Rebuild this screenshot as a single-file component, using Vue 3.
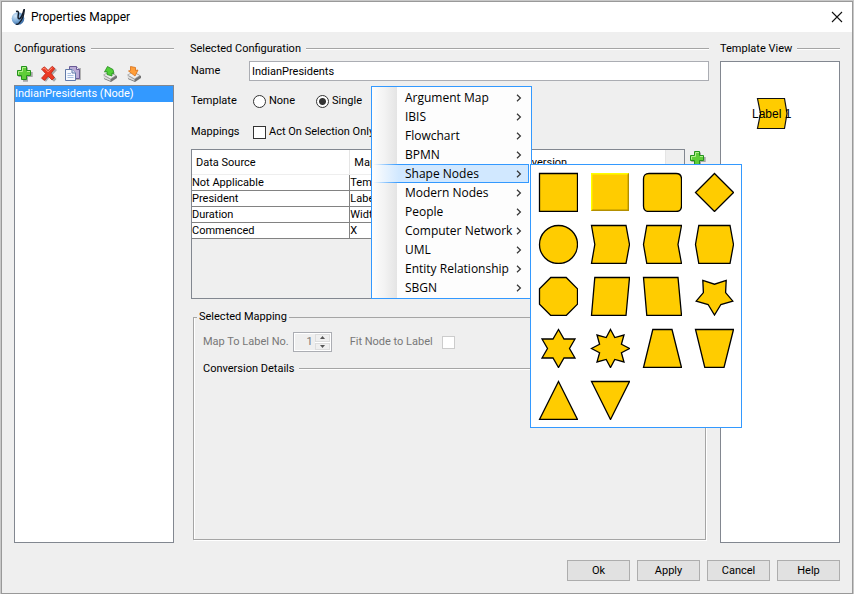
<script setup>
import { ref } from 'vue'

const name = ref('IndianPresidents')
const template = ref('single')
const actOnSelection = ref(false)
const rows = [
  ['Not Applicable', 'Template', ''],
  ['President', 'Label', ''],
  ['Duration', 'Width', ''],
  ['Commenced', 'X', '']
]
const menu = ['Argument Map', 'IBIS', 'Flowchart', 'BPMN', 'Shape Nodes', 'Modern Nodes', 'People', 'Computer Network', 'UML', 'Entity Relationship', 'SBGN']
const shapes = [
  { id: 'Square', d: 'M1.5 1.5H39.5V39.5H1.5Z' },
  { id: 'Bevelled square', bevel: true },
  { id: 'Rounded square', d: 'M7 1.5H34Q39.5 1.5 39.5 7V34Q39.5 39.5 34 39.5H7Q1.5 39.5 1.5 34V7Q1.5 1.5 7 1.5Z' },
  { id: 'Diamond', d: 'M20.5 1.5L39.5 20.5L20.5 39.5L1.5 20.5Z' },
  { id: 'Circle', d: 'M20.5 1.5A19 19 0 1 1 20.5 39.5A19 19 0 1 1 20.5 1.5Z' },
  { id: 'Right step', d: 'M1.5 1.5H36L39.5 20.5L36 39.5H1.5L4.8 20.5Z' },
  { id: 'Left step', d: 'M4.8 1.5H39.5L36 20.5L39.5 39.5H4.8L1.5 20.5Z' },
  { id: 'Hexagon', d: 'M4.8 1.5H36L39.5 20.5L36 39.5H4.8L1.5 20.5Z' },
  { id: 'Octagon', d: 'M12.8 1.5H28.2L39.5 12.8V28.2L28.2 39.5H12.8L1.5 28.2V12.8Z' },
  { id: 'Parallelogram', d: 'M4.8 1.5H39.5L36 39.5H1.5Z' },
  { id: 'Reverse parallelogram', d: 'M1.5 1.5H36L39.5 39.5H4.8Z' },
  { id: 'Five-point star', d: 'M8.8 4.4L20.5 8.2L32.2 4.4L31.6 16.6L38.8 25.2L26.9 28.5L20.5 39L14.1 28.5L2.2 25.2L9.4 16.6Z' },
  { id: 'Six-point star', d: 'M20.5 1.5L26 11H37L31.5 20.5L37 30H26L20.5 39.5L15 30H4L9.5 20.5L4 11H15Z' },
  { id: 'Eight-point star', d: 'M20.5 1.5L24.8 9.6L34 7L31.4 16.2L39.5 20.5L31.4 24.8L34 34L24.8 31.4L20.5 39.5L16.2 31.4L7 34L9.6 24.8L1.5 20.5L9.6 16.2L7 7L16.2 9.6Z' },
  { id: 'Trapezoid', d: 'M10.8 1.5H30L39.5 39.5H1.5Z' },
  { id: 'Inverted trapezoid', d: 'M1.5 1.5H39.5L30 39.5H10.8Z' },
  { id: 'Triangle', d: 'M20.5 1.5L39.5 39.5H1.5Z' },
  { id: 'Inverted triangle', d: 'M1.5 1.5H39.5L20.5 39.5Z' }
]
</script>

<template>
  <div class="window">
    <header class="titlebar">
      <svg class="logo" width="16" height="18" viewBox="0 0 16 18" aria-hidden="true">
        <defs>
          <radialGradient id="ball" cx="0.3" cy="0.3" r="0.8">
            <stop offset="0" stop-color="#d6e8f8" /><stop offset="0.5" stop-color="#80aeda" /><stop offset="1" stop-color="#2f639e" />
          </radialGradient>
        </defs>
        <circle cx="7" cy="10.5" r="6.3" fill="url(#ball)" />
        <path d="M5 3.5Q8.6 2.5 7.2 7.5Q6.6 11.2 8.6 10.8Q11.5 8.5 13 1.5" fill="none" stroke="#131d2b" stroke-width="1.5" />
        <path d="M13.4 1Q12.8 11 7.8 15.4Q5.8 17 5 15.8" fill="none" stroke="#131d2b" stroke-width="1.3" />
      </svg>
      <h1>Properties Mapper</h1>
      <button class="close" type="button" aria-label="Close">
        <svg width="12" height="12" viewBox="0 0 12 12"><path d="M1 1L11 11M11 1L1 11" stroke="#111" stroke-width="1.1" /></svg>
      </button>
    </header>

    <main class="body">
      <section class="configs">
        <h2 class="heading">Configurations</h2>
        <div class="toolbar">
          <button type="button" aria-label="Add configuration">
            <svg width="18" height="18" viewBox="0 0 18 18">
              <path d="M7 2.5H12V7H16.7V12H12V16.7H7V12H2.3V7H7Z" fill="#888" opacity="0.7" />
              <path d="M5.5 1.5H10.5V5.5H14.5V10.5H10.5V14.5H5.5V10.5H1.5V5.5H5.5Z" fill="#5fce38" stroke="#23921c" />
              <path d="M6.5 6.5V2.5H10M2.5 9.5V6.5H6.5M11 6.5H14" fill="none" stroke="#b5f08f" />
            </svg>
          </button>
          <button type="button" aria-label="Delete configuration">
            <svg width="18" height="18" viewBox="0 0 18 18">
              <path d="M3 5L6 3L10 7L14 2.5L17 5L12.5 10L16.5 14L14 16.8L9.5 12.5L6 16.8L3 14.8L7 10Z" fill="#777" opacity="0.6" />
              <path d="M1.5 4L4.5 1.8L8 5.5L12.3 1.2L14.8 3.6L11 8.2L14.5 12.6L12 15L8.2 11.2L4.5 15.4L1.5 13.2L5.6 8.6Z" fill="#ec3a24" stroke="#bd2717" stroke-width="0.8" />
              <path d="M2.6 4L4.5 3L8 6.9L12.3 2.6" fill="none" stroke="#ff8a70" />
            </svg>
          </button>
          <button type="button" aria-label="Duplicate configuration">
            <svg width="18" height="18" viewBox="0 0 18 18">
              <path d="M7 3H17V15H7Z" fill="#888" opacity="0.6" />
              <path d="M5.5 1.5H12.5L15.5 4.5V13.5H5.5Z" fill="#b9abd6" stroke="#6b5b96" />
              <path d="M12.5 1.5V4.5H15.5" fill="#eee9f8" stroke="#6b5b96" />
              <path d="M1.5 4.5H8L11.5 8V15.5H1.5Z" fill="#f6f9ff" stroke="#6179a8" />
              <path d="M8 4.5V8H11.5" fill="#dce6f6" stroke="#6179a8" />
              <path d="M3.5 8.5H7M3.5 10.5H9.5M3.5 12.5H9.5" stroke="#a9bfdf" />
            </svg>
          </button>
          <button class="apart" type="button" aria-label="Export configuration">
            <svg width="16" height="18" viewBox="0 0 16 18">
              <path d="M2 11L8 7L15 11V13L9 17L2 14Z" fill="#727272" />
              <path d="M1.5 10L7 7L14 10.5L8.5 14Z" fill="#eee" stroke="#999" stroke-width="0.7" />
              <path d="M1.5 10.5L8.5 14.5V16L1.5 13Z" fill="#ddd" />
              <path d="M5.5 1.5L11 4.5L12 8.5L10 8V11L5 9.5V6.5L2.5 7Z" fill="#51d038" stroke="#25891e" stroke-width="0.8" />
            </svg>
          </button>
          <button type="button" aria-label="Import configuration">
            <svg width="16" height="18" viewBox="0 0 16 18">
              <path d="M2 11L8 7L15 11V13L9 17L2 14Z" fill="#727272" />
              <path d="M1.5 10L7 7L14 10.5L8.5 14Z" fill="#eee" stroke="#999" stroke-width="0.7" />
              <path d="M1.5 10.5L8.5 14.5V16L1.5 13Z" fill="#ddd" />
              <path d="M4.5 1.5L9.5 2.5V5.5L12 5L9 11L2.5 6L4.5 5.5Z" fill="#ff9e38" stroke="#d66f18" stroke-width="0.8" />
            </svg>
          </button>
        </div>
        <ul class="list"><li class="selected">IndianPresidents (Node)</li></ul>
      </section>

      <section class="details">
        <h2 class="heading">Selected Configuration</h2>
        <div class="form">
          <label for="cfg-name">Name</label>
          <input id="cfg-name" v-model="name" class="textbox" type="text">
          <span>Template</span>
          <div class="options">
            <label><input v-model="template" type="radio" name="template" value="none">None</label>
            <label><input v-model="template" type="radio" name="template" value="single">Single</label>
          </div>
          <span>Mappings</span>
          <div class="options">
            <label><input v-model="actOnSelection" type="checkbox">Act On Selection Only</label>
          </div>
        </div>

        <div class="mappings">
          <div class="table-pane">
            <table>
              <thead><tr><th>Data Source</th><th>Mapping</th><th>Conversion</th></tr></thead>
              <tbody><tr v-for="r in rows" :key="r[0]"><td v-for="(c, i) in r" :key="i">{{ c }}</td></tr></tbody>
            </table>
          </div>
          <button class="add" type="button" aria-label="Add mapping">
            <svg width="18" height="18" viewBox="0 0 18 18">
              <path d="M7 2.5H12V7H16.7V12H12V16.7H7V12H2.3V7H7Z" fill="#888" opacity="0.7" />
              <path d="M5.5 1.5H10.5V5.5H14.5V10.5H10.5V14.5H5.5V10.5H1.5V5.5H5.5Z" fill="#5fce38" stroke="#23921c" />
              <path d="M6.5 6.5V2.5H10M2.5 9.5V6.5H6.5M11 6.5H14" fill="none" stroke="#b5f08f" />
            </svg>
          </button>
        </div>

        <fieldset class="group">
          <legend>Selected Mapping</legend>
          <div class="label-row">
            <label for="label-no">Map To Label No.</label>
            <div class="spinner">
              <input id="label-no" type="text" value="1" disabled>
              <div class="steps">
                <button type="button" disabled aria-label="Increase"><svg width="5" height="3" viewBox="0 0 5 3"><path d="M0 3L2.5 0L5 3Z" fill="#555" /></svg></button>
                <button type="button" disabled aria-label="Decrease"><svg width="5" height="3" viewBox="0 0 5 3"><path d="M0 0L2.5 3L5 0Z" fill="#555" /></svg></button>
              </div>
            </div>
            <label class="fit">Fit Node to Label<input type="checkbox" disabled></label>
          </div>
          <h3 class="heading">Conversion Details</h3>
        </fieldset>
      </section>

      <section class="preview">
        <h2 class="heading">Template View</h2>
        <div class="canvas">
          <svg width="48" height="36" viewBox="0 0 48 36" role="img" aria-label="Label 1 node">
            <path d="M8.5 3.5H35.5L38 18.5L35.5 33.5H8.5L11.5 18.5Z" fill="#fc0" stroke="#111" stroke-width="1.2" />
            <text x="3" y="23">Label 1</text>
          </svg>
        </div>
      </section>
    </main>

    <footer class="actions">
      <button v-for="b in ['Ok', 'Apply', 'Cancel', 'Help']" :key="b" type="button">{{ b }}</button>
    </footer>

    <nav class="menu" aria-label="Palette">
      <button v-for="m in menu" :key="m" type="button" :class="{ active: m === 'Shape Nodes' }">
        <span>{{ m }}</span>
        <svg width="6" height="8" viewBox="0 0 6 8"><path d="M1 0.8L4.4 4L1 7.2" fill="none" stroke="#333" stroke-width="1.2" /></svg>
      </button>
    </nav>

    <div class="palette">
      <button v-for="s in shapes" :key="s.id" type="button" :aria-label="s.id">
        <svg width="40" height="40" viewBox="0 0 40 40">
          <g v-if="s.bevel">
            <path d="M1 1H39V39H1Z" fill="#fc0" />
            <path d="M1 39V1H39L37.5 2.4H2.4V37.5Z" fill="#ff0" />
            <path d="M39 1V39H1L2.5 37.6H37.6V2.5Z" fill="#b38f00" />
          </g>
          <path v-else :d="s.d" fill="#fc0" stroke="#000" stroke-width="1.3" />
        </svg>
      </button>
    </div>
  </div>
</template>

<style>
body { margin: 0; background: #c8c8c8; }
</style>

<style scoped>
* { box-sizing: border-box; }
.window {
  position: relative;
  display: flex;
  flex-direction: column;
  min-height: calc(100vh - 1px);
  margin: 1px 1px 0;
  border: 1px solid #999;
  background: #efefef;
  color: #000;
  font: 11px/16px Roboto, "Noto Sans", sans-serif;
}
button, input { font: inherit; color: inherit; margin: 0; }
button { padding: 0; border: 0; background: none; }
svg { display: block; }
.titlebar {
  display: flex;
  align-items: center;
  height: 30px;
  padding: 0 9px;
  background: #fff;
}
.titlebar h1 { flex: 1; margin: 0 0 0 4px; font-size: 12px; font-weight: 400; }
.body {
  flex: 1;
  display: grid;
  grid-template-columns: 160px 1fr 120px;
  gap: 11px;
  padding: 9px 12px 0;
}
.body > section { display: flex; flex-direction: column; min-width: 0; }
.heading {
  display: flex;
  align-items: center;
  gap: 5px;
  margin: 0;
  font-size: 11px;
  line-height: 16px;
  font-weight: 400;
  white-space: nowrap;
}
.heading::after { content: ""; flex: 1; height: 1px; background: #a5a5a5; border-bottom: 1px solid #fff; }
.toolbar { display: flex; gap: 6px; height: 28px; padding: 5px 0 0 2px; }
.toolbar .apart { margin-left: 14px; }
.toolbar .apart + button { margin-left: 2px; }
.list { flex: 1; margin: 0; padding: 0; list-style: none; border: 1px solid #828790; background: #fff; }
.selected { background: #3399ff; color: #fff; }
.details { padding-left: 5px; }
.form {
  display: grid;
  grid-template-columns: 58px 1fr;
  grid-template-rows: 20px 31px;
  grid-auto-rows: 31px;
  padding: 4px 0 0 1px;
  align-items: center;
}
.textbox { width: 100%; height: 20px; padding: 0 2px; border: 1px solid #abadb3; background: #fff; outline: 0; }
.form > :nth-child(n+3) { margin-top: 9px; }
.options { display: flex; gap: 21px; padding-left: 4px; }
.options label { display: flex; align-items: center; gap: 3px; white-space: nowrap; }
input[type="radio"], input[type="checkbox"] {
  appearance: none;
  width: 13px;
  height: 13px;
  border: 1px solid #333;
  background: #fff;
}
input[type="radio"] { border-radius: 50%; }
input[type="radio"]:checked { background: radial-gradient(circle, #333 3px, #fff 4px); }
.mappings { display: flex; align-items: flex-start; gap: 4px; padding: 6px 2px 0 1px; }
.table-pane { flex: 1; height: 150px; border: 1px solid #828790; background: linear-gradient(#fff, #fff) 0 0 / calc(100% - 19px) 24px no-repeat #efefef; }
table { width: calc(100% - 18px); border-collapse: collapse; table-layout: fixed; }
th { height: 24px; padding: 2px 4px 0; text-align: left; font-weight: 400; background: #fff; border-right: 1px solid #e5e5e5; border-bottom: 1px solid #eee; }
td { height: 16px; padding: 0 1px 0 0; line-height: 15px; background: #fff; border-right: 1px solid #828282; border-bottom: 1px solid #828282; }
.add { padding-top: 1px; }
.group {
  flex: 1;
  margin: 10px 3px 3px;
  padding: 7px 2px 0 9px;
  border: 1px solid #a5a5a5;
  box-shadow: 1px 1px 0 #fff, inset 1px 0 0 #fff;
  min-width: 0;
}
.group legend { margin-left: -6px; padding: 0 2px; }
.label-row { display: flex; align-items: center; height: 20px; gap: 4px; color: #777; }
.spinner { display: flex; width: 39px; height: 20px; padding: 1px; border: 1px solid #abadb3; background: #fff; }
.spinner input { flex: 1; min-width: 0; padding: 0 2px; text-align: right; border: 0; background: #efefef; }
.steps { display: flex; flex-direction: column; width: 15px; gap: 1px; }
.steps button { flex: 1; display: flex; align-items: center; justify-content: center; background: #efefef; border: 1px solid #ddd; }
.fit { display: flex; align-items: center; gap: 9px; margin-left: 14px; }
.fit input[type="checkbox"] { border-color: #ccc; }
.group .heading { margin-top: 9px; }
.canvas { flex: 1; margin-top: 4px; padding: 33px 0 0 28px; border: 1px solid #828790; background: #fff; }
.canvas text { font: 12px "Liberation Sans", sans-serif; }
.actions { display: flex; justify-content: flex-end; gap: 7px; padding: 17px 12px 12px; }
.actions button { width: 63px; height: 21px; border: 1px solid #adadad; background: #e1e1e1; line-height: 19px; }
.menu {
  position: absolute;
  left: 369px;
  top: 84px;
  width: 161px;
  padding: 1px 2px 1px 1px;
  border: 1px solid #3399ff;
  background: linear-gradient(90deg, #fdfdfd, #f3f3f3 50%, #e4e4e4) 0 0 / 25px 100% no-repeat #fdfdfd;
  font-family: "Open Sans", "Noto Sans", sans-serif;
  font-size: 12px;
}
.menu button {
  display: flex;
  align-items: center;
  justify-content: space-between;
  width: 100%;
  height: 19px;
  padding: 0 7px 0 32px;
  text-align: left;
  white-space: nowrap;
}
.menu .active {
  background:
    linear-gradient(90deg, transparent, #3399ff 26px) 0 0 / 100% 1px no-repeat,
    linear-gradient(90deg, transparent, #3399ff 26px) 0 100% / 100% 1px no-repeat,
    linear-gradient(#3399ff, #3399ff) 100% 0 / 1px 100% no-repeat,
    linear-gradient(90deg, #fdfdfd, #d1e8ff 26px);
}
.palette {
  position: absolute;
  left: 528px;
  top: 162px;
  display: grid;
  grid-template-columns: repeat(4, 40px);
  gap: 12px;
  padding: 7px;
  border: 1px solid #3399ff;
  background: #fff;
}
</style>
